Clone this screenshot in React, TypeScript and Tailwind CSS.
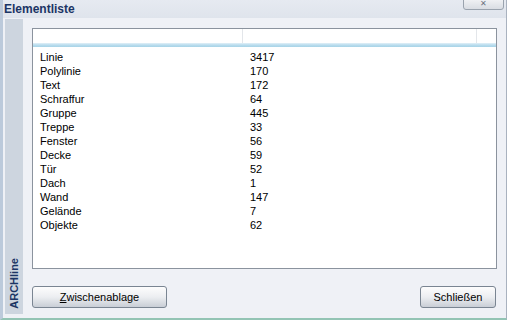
import React from 'react';

const rows: [string, string][] = [
  ['Linie', '3417'],
  ['Polylinie', '170'],
  ['Text', '172'],
  ['Schraffur', '64'],
  ['Gruppe', '445'],
  ['Treppe', '33'],
  ['Fenster', '56'],
  ['Decke', '59'],
  ['Tür', '52'],
  ['Dach', '1'],
  ['Wand', '147'],
  ['Gelände', '7'],
  ['Objekte', '62'],
];

const Button = ({ className, children }: { className: string; children: React.ReactNode }) => (
  <button
    className={`h-[22px] rounded-[3px] border border-[#7a8592] bg-gradient-to-b from-[#fdfdfd] via-[#eceef1] to-[#c9ced6] text-[11px] text-black ${className}`}
  >
    {children}
  </button>
);

export default function App() {
  return (
    <div
      className="w-[509px] h-[322px] bg-white overflow-hidden"
      style={{ fontFamily: '"Liberation Sans", Arial, sans-serif' }}
    >
      <div className="relative w-[507px] h-[320px] flex flex-col bg-[#eff1f6] border-l-[3px] border-l-[#bccadb] border-r border-r-[#a9b2bf] border-b-2 border-b-[#93c4b4]">
        {/* title bar */}
        <div className="h-[18px] shrink-0 bg-gradient-to-b from-[#e6eaf1] to-[#dfe4ec] pl-[1px] flex items-center">
          <span className="text-[12px] font-bold text-[#1b3565] leading-none">Elementliste</span>
        </div>
        <div className="absolute right-[2px] top-[-3px] w-[41px] h-[13px] rounded-b-[3px] border border-[#9aa3ae] bg-gradient-to-b from-[#f4f5f7] to-[#d9dde3] flex items-end justify-center pb-[1px]">
          <span className="text-[8px] leading-[8px] text-[#6b7380]">✕</span>
        </div>

        <div className="flex flex-1 min-h-0">
          {/* side strip */}
          <div className="ml-[2px] w-[18px] mb-[4px] mt-[1px] bg-[#cdd5df] flex items-end justify-center pb-[5px]">
            <span
              className="text-[11px] font-bold text-[#1b3565] rotate-180 leading-none"
              style={{ writingMode: 'vertical-rl' }}
            >
              ARCHline
            </span>
          </div>

          <div className="flex flex-col ml-[9px] mt-[10px]">
            {/* list */}
            <div className="w-[465px] h-[241px] border border-[#8b939e] bg-white">
              <div className="h-[18px] flex flex-col">
                <div className="flex flex-1">
                  <div className="w-[210px] border-r border-r-[#e3e6ea]" />
                  <div className="w-[234px] border-r border-r-[#e3e6ea]" />
                </div>
                <div className="h-[4px] bg-gradient-to-b from-[#e2f0f7] via-[#b9ddee] to-[#a7d3e7]" />
              </div>
              <div className="pt-[3px]">
                {rows.map(([name, value]) => (
                  <div key={name} className="flex h-[14px] items-center text-[11px] text-black leading-none">
                    <span className="w-[217px] pl-[7px]">{name}</span>
                    <span>{value}</span>
                  </div>
                ))}
              </div>
            </div>

            {/* buttons */}
            <div className="flex justify-between mt-[17px] w-[464px]">
              <Button className="w-[135px]">
                <span className="underline">Z</span>wischenablage
              </Button>
              <Button className="w-[76px]">Schließen</Button>
            </div>
          </div>
        </div>
      </div>
    </div>
  );
}
